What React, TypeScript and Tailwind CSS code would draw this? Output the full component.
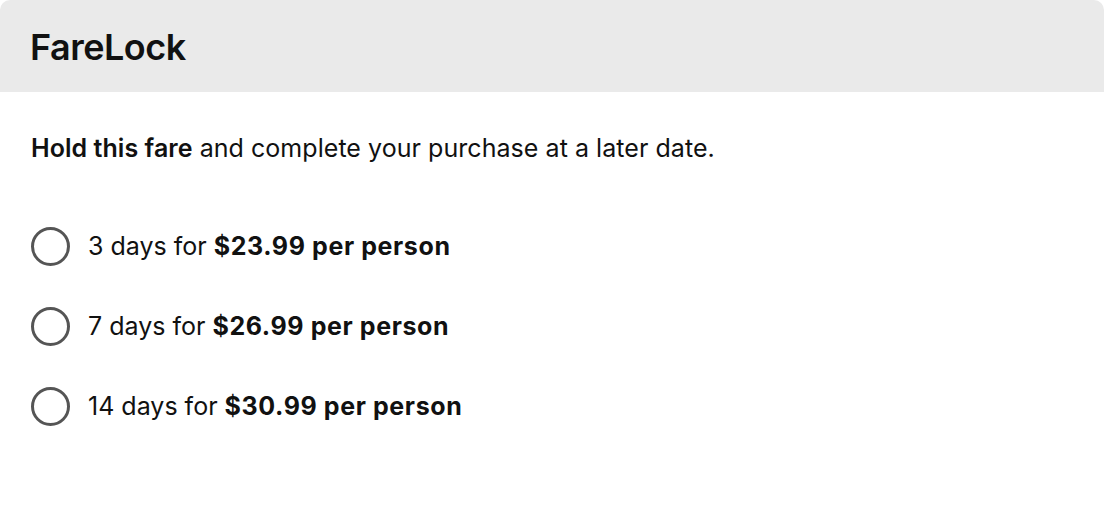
const options = [
  { days: 3, price: "$23.99" },
  { days: 7, price: "$26.99" },
  { days: 14, price: "$30.99" },
];

export default function App() {
  return (
    <div className="w-[1104px] h-[516px] bg-white font-['Inter',sans-serif] text-[#111]">
      <div className="h-full rounded-[10px] overflow-hidden bg-white">
        {/* Header */}
        <div className="h-[92px] bg-[#eaeaea] flex items-center px-[30px]">
          <h1 className="text-[36px] font-semibold tracking-[-0.5px] pt-[2px]">FareLock</h1>
        </div>

        {/* Body */}
        <div className="px-[31px] pt-[40px]">
          <p className="text-[25px] leading-[32px] tracking-[0.05px]">
            <span className="font-semibold">Hold this fare</span> and complete your purchase at a later date.
          </p>

          <div className="mt-[63px] flex flex-col gap-[41px]">
            {options.map((o) => (
              <label key={o.days} className="flex items-center gap-[18px] cursor-pointer">
                <span className="w-[39px] h-[39px] rounded-full border-[3px] border-[#555] shrink-0" />
                <span className="text-[25px] leading-[39px]">
                  {o.days} days for{" "}
                  <span className="font-bold tracking-[0.6px]">{o.price} per person</span>
                </span>
              </label>
            ))}
          </div>
        </div>
      </div>
    </div>
  );
}
